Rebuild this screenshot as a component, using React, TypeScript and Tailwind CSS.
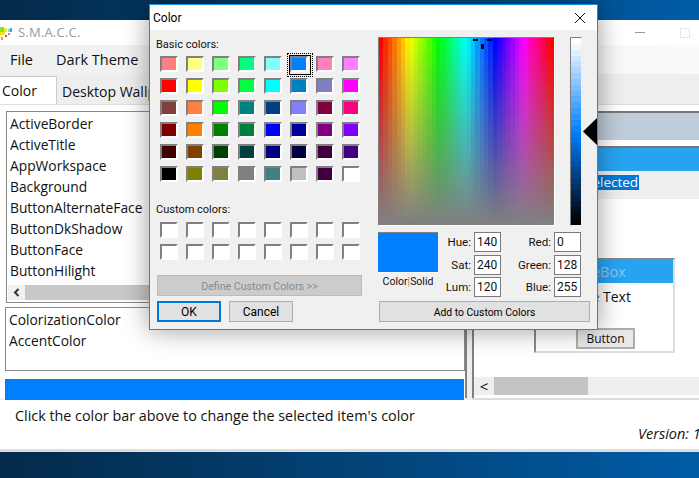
const basicColors = [
  ["#ff8080", "#ffff80", "#80ff80", "#00ff80", "#80ffff", "#0080ff", "#ff80c0", "#ff80ff"],
  ["#ff0000", "#ffff00", "#80ff00", "#00ff40", "#00ffff", "#0080c0", "#8080c0", "#ff00ff"],
  ["#804040", "#ff8040", "#00ff00", "#008080", "#004080", "#8080ff", "#800040", "#ff0080"],
  ["#800000", "#ff8000", "#008000", "#008040", "#0000ff", "#0000a0", "#800080", "#8000ff"],
  ["#400000", "#804000", "#004000", "#004040", "#000080", "#000040", "#400040", "#400080"],
  ["#000000", "#808000", "#808040", "#808080", "#408080", "#c0c0c0", "#400040", "#ffffff"],
]

const systemItems = [
  "ActiveBorder",
  "ActiveTitle",
  "AppWorkspace",
  "Background",
  "ButtonAlternateFace",
  "ButtonDkShadow",
  "ButtonFace",
  "ButtonHilight",
]

function Swatch({ color, selected }: { color: string; selected?: boolean }) {
  return (
    <div
      className="relative h-[16px] w-[18px] border-2 border-t-[#808080] border-l-[#808080] border-r-white border-b-white"
      style={{ backgroundColor: color }}
    >
      {selected && (
        <div className="absolute -top-[5px] -left-[5px] h-[24px] w-[26px] border border-dotted border-black p-[1px]">
          <div className="h-full w-full border border-black" />
        </div>
      )}
    </div>
  )
}

function SpectrumField() {
  const cols = 40
  const rows = 40
  const cells = []
  for (let y = 0; y < rows; y++) {
    for (let x = 0; x < cols; x++) {
      const hue = (x / (cols - 1)) * 360
      const sat = 100 - (y / (rows - 1)) * 100
      cells.push(
        <rect
          key={`${x}-${y}`}
          x={(x * 175) / cols}
          y={(y * 187) / rows}
          width={175 / cols + 0.5}
          height={187 / rows + 0.5}
          fill={`hsl(${hue}, ${sat}%, 50%)`}
        />,
      )
    }
  }
  return (
    <svg width="175" height="187" viewBox="0 0 175 187" shapeRendering="crispEdges" className="block">
      {cells}
      <rect x="94" y="1" width="5" height="2" fill="#000" />
      <rect x="108" y="1" width="5" height="2" fill="#000" />
      <rect x="102" y="6" width="3" height="5" fill="#000" />
    </svg>
  )
}

function LumBar() {
  const steps = 32
  const bars = []
  for (let i = 0; i < steps; i++) {
    bars.push(
      <rect
        key={i}
        x="0"
        y={(i * 187) / steps}
        width="10"
        height={187 / steps + 0.5}
        fill={`hsl(210, 100%, ${100 - (i / (steps - 1)) * 100}%)`}
      />,
    )
  }
  return (
    <svg width="10" height="187" viewBox="0 0 10 187" shapeRendering="crispEdges" className="block">
      {bars}
    </svg>
  )
}

function ValueRow({ label, value, labelWidth }: { label: string; value: string; labelWidth: string }) {
  return (
    <div className="flex h-[20px] items-center">
      <span className={`${labelWidth} text-right text-[11.5px] leading-[14px] text-[#111]`}>{label}</span>
      <span className="ml-[3px] flex h-[20px] w-[27px] items-center border border-[#7a7a7a] bg-white pl-[2px] text-[12px] leading-[14px] text-[#111]">
        {value}
      </span>
    </div>
  )
}

function ColorDialog() {
  return (
    <div
      className="absolute top-[4px] left-[149px] flex h-[326px] w-[449px] flex-col border border-[#1a8fdc] bg-[#f0f0f0] shadow-[0_0_24px_rgba(0,0,0,0.4)]"
      style={{ fontFamily: 'Roboto, "Liberation Sans", sans-serif' }}
    >
      <div className="flex h-[25px] items-center justify-between bg-white pl-[3px] pr-[11px]">
        <span className="text-[12px] text-black">Color</span>
        <svg width="12" height="12" viewBox="0 0 12 12">
          <path d="M1 1 L11 11 M11 1 L1 11" stroke="#111" strokeWidth="1" fill="none" />
        </svg>
      </div>
      <div className="flex flex-1">
        <div className="w-[228px] pl-[6px] pt-[8px]">
          <div className="h-[14px] text-[11px] leading-[14px] text-[#111]">Basic colors:</div>
          <div className="mt-[4px] ml-[4px] grid grid-cols-[repeat(8,18px)] gap-x-[8px] gap-y-[6px]">
            {basicColors.flat().map((c, i) => (
              <Swatch key={i} color={c} selected={i === 5} />
            ))}
          </div>
          <div className="mt-[21px] h-[14px] text-[11px] leading-[14px] text-[#111]">Custom colors:</div>
          <div className="mt-[5px] ml-[4px] grid grid-cols-[repeat(8,18px)] gap-x-[8px] gap-y-[6px]">
            {Array.from({ length: 16 }).map((_, i) => (
              <Swatch key={i} color="#ffffff" />
            ))}
          </div>
          <div className="mt-[15px] ml-[1px] flex h-[21px] w-[205px] items-center justify-center border border-[#bcbcbc] bg-[#cccccc] pt-[2px] text-[10.6px] text-[#8a8a8a]">
            Define Custom Colors {">>"}
          </div>
          <div className="mt-[5px] ml-[1px] flex gap-[8px]">
            <div className="flex h-[21px] w-[64px] items-center justify-center border-2 border-[#0078d7] bg-[#e1e1e1] text-[12px] text-black">
              OK
            </div>
            <div className="flex h-[21px] w-[64px] items-center justify-center border border-[#adadad] bg-[#e1e1e1] text-[12px] text-black">
              Cancel
            </div>
          </div>
        </div>
        <div className="relative flex-1 pt-[7px]">
          <div className="flex">
            <div className="border border-t-[#808080] border-l-[#808080] border-r-white border-b-white">
              <SpectrumField />
            </div>
            <div className="ml-[15px] border border-t-[#808080] border-l-[#808080] border-r-[#f0f0f0] border-b-[#f0f0f0]">
              <LumBar />
            </div>
          </div>
          <svg width="14" height="27" viewBox="0 0 14 27" className="absolute top-[88px] left-[205px]">
            <path d="M14 0 L0 13.5 L14 27 Z" fill="#000" />
          </svg>
          <div className="mt-[6px] flex">
            <div className="w-[60px]">
              <div className="h-[41px] border-t border-t-[#808080] border-b border-b-white bg-[#0080ff]" />
              <div className="mt-[2px] text-center text-[10.5px] leading-[14px] whitespace-nowrap text-[#111]">
                Color<span className="text-[#c07a30]">|</span>Solid
              </div>
            </div>
            <div className="flex flex-col gap-[2.5px]">
              <ValueRow label="Hue:" value="140" labelWidth="w-[33px]" />
              <ValueRow label="Sat:" value="240" labelWidth="w-[33px]" />
              <ValueRow label="Lum:" value="120" labelWidth="w-[33px]" />
            </div>
            <div className="flex flex-col gap-[2.5px]">
              <ValueRow label="Red:" value="0" labelWidth="w-[50px]" />
              <ValueRow label="Green:" value="128" labelWidth="w-[50px]" />
              <ValueRow label="Blue:" value="255" labelWidth="w-[50px]" />
            </div>
          </div>
          <div className="mt-[4px] ml-[1px] flex h-[21px] w-[211px] items-center justify-center border border-[#adadad] bg-[#e1e1e1] pt-[2px] text-[10.4px] text-black">
            Add to Custom Colors
          </div>
        </div>
      </div>
    </div>
  )
}

function LeftColumn() {
  return (
    <div className="h-[293px] w-[467px] border-r-2 border-[#808080] pl-[5px] pt-[6px]">
      <div className="ml-[1px] flex h-[192px] flex-col border border-[#888] bg-white pl-[3px] pt-[1px]">
        {systemItems.map((item) => (
          <div key={item} className="h-[21px] text-[13.8px] leading-[21px] text-[#111]">
            {item}
          </div>
        ))}
        <div className="mt-[4px] -ml-[2px] flex h-[15px] items-center bg-[#f0f0f0]">
          <div className="flex w-[17px] justify-center">
            <svg width="7" height="9" viewBox="0 0 7 9">
              <path d="M5.5 1 L2 4.5 L5.5 8" stroke="#333" strokeWidth="2" fill="none" />
            </svg>
          </div>
          <div className="h-full w-[200px] bg-[#c8c8c8]" />
        </div>
      </div>
      <div className="mt-[4px] h-[64px] border border-[#888] bg-white pl-[3px] pt-[1px]">
        <div className="h-[21px] text-[13.8px] leading-[21px] text-[#111]">ColorizationColor</div>
        <div className="h-[21px] text-[13.8px] leading-[21px] text-[#111]">AccentColor</div>
      </div>
      <div className="mt-[8px] mr-[1px] h-[21px] border border-[#666] border-r-0 bg-[#0080ff]" />
    </div>
  )
}

function RightColumn() {
  return (
    <div className="flex h-[293px] flex-1 flex-col border-l-2 border-[#808080] pt-[6px]">
      <div className="h-[29px] border-t-2 border-[#777] bg-[#bfccd9]" />
      <div className="mt-[6px] h-[25px] border-t-2 border-[#777] bg-[#26a4f2]" />
      <div className="flex h-[28px] items-start bg-[#eeeeee] pl-[110px] pt-[4px]">
        <span className="bg-[#0078d7] px-[1px] text-[13.5px] leading-[15px] text-white">Selected</span>
      </div>
      <div className="mt-[59px] ml-[60px] h-[95px] w-[141px] border-2 border-t-[#888] border-l-[#888] border-r-[#ddd] border-b-[#ddd]">
        <div className="flex h-[23px] items-center bg-[#26a4f2] pl-[14px] text-[14.5px] text-[#8fc6ee]">SampleBox</div>
        <div className="mt-[2px] h-[24px] pl-[15px] text-[14px] leading-[24px] text-[#111]">Sample Text</div>
        <div className="mt-[19px] ml-[40px] flex h-[21px] w-[59px] items-center justify-center border-2 border-[#adadad] bg-[#e8e8e8] text-[12px] text-[#111]">
          Button
        </div>
      </div>
      <div className="mt-[24px] flex h-[18px] bg-[#eeeeee]">
        <div className="flex w-[20px] items-center justify-center text-[15px] text-[#111]">{"<"}</div>
        <div className="h-full w-[94px] bg-[#c4c4c4]" />
      </div>
    </div>
  )
}

export default function App() {
  return (
    <div
      className="relative flex h-[478px] w-[699px] flex-col overflow-hidden bg-linear-to-r from-[#032a4a] to-[#005ca6]"
      style={{ fontFamily: '"Open Sans", "Liberation Sans", sans-serif' }}
    >
      <div className="mt-[20px] flex h-[432px] flex-col border-b-[3px] border-[#dddddd] bg-white">
        <div className="flex h-[25px] items-center">
          <svg width="13" height="13" viewBox="0 0 13 13" className="mt-[1px]" shapeRendering="crispEdges">
            <rect x="0" y="0" width="4" height="5" fill="#8fe01c" />
            <rect x="4" y="1" width="3" height="4" fill="#d8f03a" />
            <rect x="0" y="5" width="5" height="3" fill="#f4e020" />
            <rect x="10" y="1" width="2" height="4" fill="#29a8f0" />
            <rect x="8" y="2" width="2" height="3" fill="#7ed8e8" />
            <rect x="8" y="6" width="2" height="2" fill="#c070d0" />
            <rect x="5" y="8" width="2" height="2" fill="#e04030" />
            <rect x="1" y="10" width="2" height="3" fill="#f0a020" />
          </svg>
          <span className="ml-[5px] w-[56px] text-[13px] tracking-[0.2px] whitespace-nowrap text-[#9a9a9a]">S.M.A.C.C.</span>
          <div className="ml-[561px] h-[1px] w-[10px] bg-[#999]" />
          <div className="ml-[35px] h-[10px] w-[10px] border border-[#e5e5e5]" />
        </div>
        <div className="flex h-[29px] items-center gap-[23px] bg-linear-to-r from-[#f0f0f0] to-[#fafafa] pl-[10px] text-[14.5px] text-[#111]">
          <span>File</span>
          <span>Dark Theme</span>
        </div>
        <div className="flex h-[31px] items-end border-b border-[#dddddd] bg-[#eeeeee]">
          <div className="flex h-[28px] w-[57px] items-center border-t border-r border-[#cccccc] bg-white pl-[2px] text-[14px] text-[#111]">
            Color
          </div>
          <div className="flex h-[26px] items-center border-r border-[#cccccc] pl-[5px] pr-[8px] text-[14px] text-[#111]">
            Desktop Wallpaper
          </div>
        </div>
        <div className="flex h-[295px] items-start bg-[#eeeeee]">
          <div className="bg-white">
            <LeftColumn />
          </div>
          <div className="w-[5px]" />
          <div className="flex h-[295px] flex-1 flex-col">
            <div className="flex h-[295px] border-b-2 border-[#dddddd] bg-white">
              <RightColumn />
            </div>
          </div>
        </div>
        <div className="pl-[15px] pt-[6px] text-[14.35px] leading-[20px] text-[#111]">
          Click the color bar above to change the selected item's color
        </div>
        <div className="ml-[638px] mt-[-1px] text-[14.5px] leading-[18px] whitespace-nowrap text-[#111] italic">
          Version: 1.0.0
        </div>
      </div>
      <ColorDialog />
    </div>
  )
}
